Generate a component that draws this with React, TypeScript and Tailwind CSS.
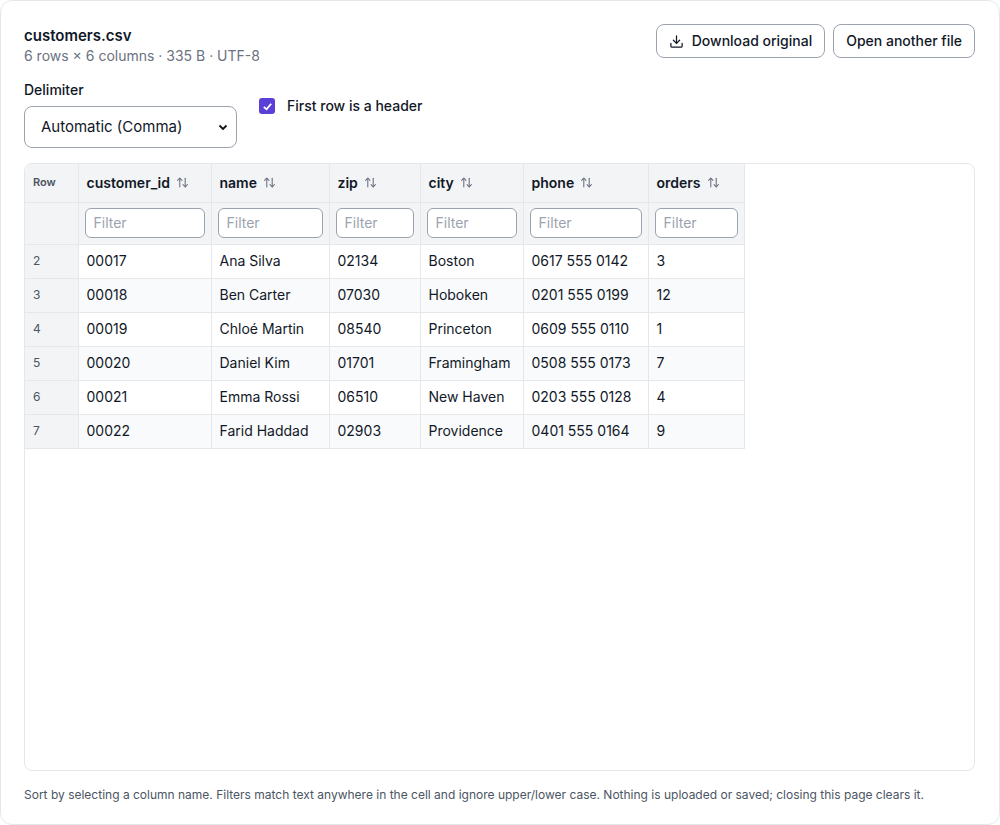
import { ArrowUpDown, Download } from "lucide-react";

const cols = [
  { name: "customer_id", w: "w-[133px]" },
  { name: "name", w: "w-[118px]" },
  { name: "zip", w: "w-[91px]" },
  { name: "city", w: "w-[103px]" },
  { name: "phone", w: "w-[125px]" },
  { name: "orders", w: "w-[96px]" },
];

const rows = [
  ["00017", "Ana Silva", "02134", "Boston", "0617 555 0142", "3"],
  ["00018", "Ben Carter", "07030", "Hoboken", "0201 555 0199", "12"],
  ["00019", "Chloé Martin", "08540", "Princeton", "0609 555 0110", "1"],
  ["00020", "Daniel Kim", "01701", "Framingham", "0508 555 0173", "7"],
  ["00021", "Emma Rossi", "06510", "New Haven", "0203 555 0128", "4"],
  ["00022", "Farid Haddad", "02903", "Providence", "0401 555 0164", "9"],
];

export default function App() {
  return (
    <div className="w-[1000px] h-[825px] bg-white font-[Inter] text-[#111827]">
      <div className="h-[825px] border border-[#e5e7eb] rounded-xl pl-[23px] pr-6 pt-[25px] pb-4 flex flex-col">
        <div className="flex justify-between items-start">
          <div>
            <div className="text-[15px] font-semibold leading-5">customers.csv</div>
            <div className="text-sm text-[#6b7280] leading-5">6 rows × 6 columns · 335 B · UTF-8</div>
          </div>
          <div className="flex gap-2 -mt-[2px]">
            <button className="h-[34px] px-3 border border-[#9ca3af] rounded-lg text-sm font-medium flex items-center gap-2">
              <Download size={15} strokeWidth={2} />Download original
            </button>
            <button className="h-[34px] px-3 border border-[#9ca3af] rounded-lg text-sm font-medium">Open another file</button>
          </div>
        </div>
        <div className="flex items-start gap-[22px] mt-[14px]">
          <div>
            <div className="text-sm font-medium leading-5 mb-[6px]">Delimiter</div>
            <div className="w-[213px] h-[42px] border border-[#9ca3af] rounded-lg flex items-center justify-between pl-4 pr-2 text-[15px]">
              <span>Automatic (Comma)</span>
              <svg width="10" height="10" viewBox="0 0 10 10"><path d="M1.5 3.5 L5 7 L8.5 3.5" fill="none" stroke="#111" strokeWidth="1.8" /></svg>
            </div>
          </div>
          <label className="flex items-center gap-3 text-sm font-medium mt-[16px]">
            <span className="w-4 h-4 rounded-[3px] bg-[#5b3fd6] flex items-center justify-center">
              <svg width="11" height="11" viewBox="0 0 12 12"><path d="M2 6.5 L5 9 L10 3" fill="none" stroke="white" strokeWidth="2" /></svg>
            </span>
            First row is a header
          </label>
        </div>
        <div className="mt-[15px] h-[608px] border border-[#e5e7eb] rounded-lg overflow-hidden">
          <table className="border-collapse text-sm table-fixed">
            <thead>
              <tr className="bg-[#f3f4f6] h-[38px]">
                <th className="w-[53px] text-left pl-2 text-[11px] font-semibold text-[#4b5563] border-r border-[#e5e7eb]">Row</th>
                {cols.map((c) => (
                  <th key={c.name} className={`${c.w} text-left px-2 font-semibold border-r border-[#e5e7eb]`}>
                    <span className="flex items-center gap-[6px]">{c.name}<ArrowUpDown size={13} className="text-[#6b7280]" /></span>
                  </th>
                ))}
              </tr>
              <tr className="bg-[#f3f4f6] h-[42px] border-t border-[#e5e7eb]">
                <th className="border-r border-[#e5e7eb]"></th>
                {cols.map((c) => (
                  <th key={c.name} className="px-[6px] border-r border-[#e5e7eb]">
                    <div className="h-[30px] border border-[#9ca3af] rounded-md bg-white text-left px-2 flex items-center font-normal text-[#9ca3af]">Filter</div>
                  </th>
                ))}
              </tr>
            </thead>
            <tbody>
              {rows.map((r, i) => (
                <tr key={i} className={`h-[34px] border-t border-[#e5e7eb] ${i % 2 ? "bg-[#f9fafb]" : "bg-white"}`}>
                  <td className="bg-[#f3f4f6] pl-2 text-xs text-[#4b5563] border-r border-[#e5e7eb]">{i + 2}</td>
                  {r.map((v, j) => (
                    <td key={j} className="px-2 border-r border-[#e5e7eb]">{v}</td>
                  ))}
                </tr>
              ))}
              <tr className="border-t border-[#e5e7eb]"><td colSpan={7}></td></tr>
            </tbody>
          </table>
        </div>
        <div className="text-xs text-[#4b5563] mt-4">
          Sort by selecting a column name. Filters match text anywhere in the cell and ignore upper/lower case. Nothing is uploaded or saved; closing this page clears it.
        </div>
      </div>
    </div>
  );
}
